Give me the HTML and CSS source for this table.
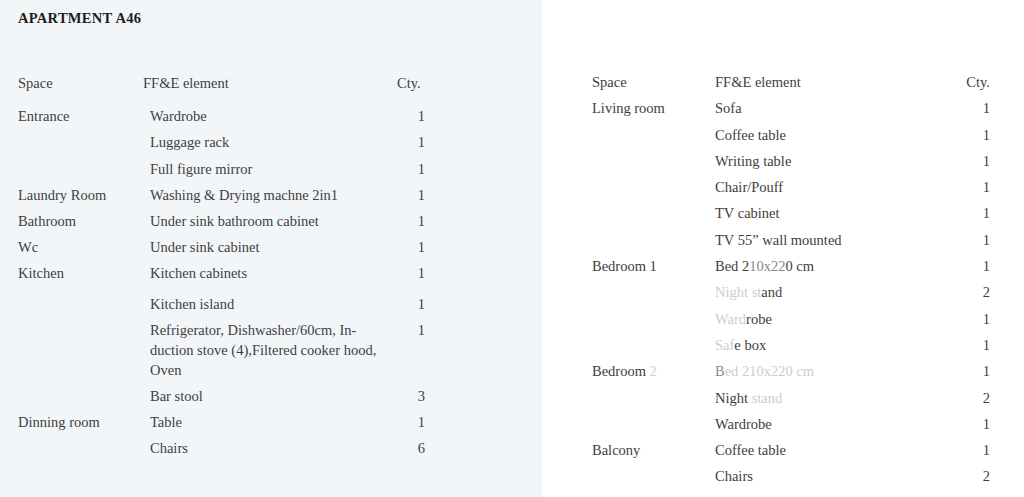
FILE: index.html
```html
<!DOCTYPE html>
<html lang="en">
<head>
<meta charset="utf-8">
<title>Apartment A46</title>
<link rel="stylesheet" href="styles.css">
</head>
<body>
<div class="page">
  <section class="panel panel-left">
    <h1 class="title">APARTMENT A46</h1>
    <table class="ffe ffe-left">
      <colgroup><col class="c-space"><col class="c-item"><col class="c-qty"></colgroup>
      <thead>
        <tr><th class="space">Space</th><th class="item head-item">FF&amp;E element</th><th class="qty head-qty">Cty.</th></tr>
      </thead>
      <tbody>
        <tr class="first"><td class="space">Entrance</td><td class="item">Wardrobe</td><td class="qty">1</td></tr>
        <tr><td class="space"></td><td class="item">Luggage rack</td><td class="qty">1</td></tr>
        <tr><td class="space"></td><td class="item">Full figure mirror</td><td class="qty">1</td></tr>
        <tr><td class="space">Laundry Room</td><td class="item">Washing &amp; Drying machne 2in1</td><td class="qty">1</td></tr>
        <tr><td class="space">Bathroom</td><td class="item">Under sink bathroom cabinet</td><td class="qty">1</td></tr>
        <tr><td class="space">Wc</td><td class="item">Under sink cabinet</td><td class="qty">1</td></tr>
        <tr><td class="space">Kitchen</td><td class="item">Kitchen cabinets</td><td class="qty">1</td></tr>
        <tr class="spaced"><td class="space"></td><td class="item">Kitchen island</td><td class="qty">1</td></tr>
        <tr><td class="space"></td><td class="item">Refrigerator, Dishwasher/60cm, In-<br>duction stove (4),Filtered cooker hood,<br>Oven</td><td class="qty">1</td></tr>
        <tr><td class="space"></td><td class="item">Bar stool</td><td class="qty">3</td></tr>
        <tr><td class="space">Dinning room</td><td class="item">Table</td><td class="qty">1</td></tr>
        <tr><td class="space"></td><td class="item">Chairs</td><td class="qty">6</td></tr>
      </tbody>
    </table>
  </section>
  <section class="panel panel-right">
    <table class="ffe ffe-right">
      <colgroup><col class="c-space"><col class="c-item"><col class="c-qty"></colgroup>
      <thead>
        <tr><th class="space">Space</th><th class="item">FF&amp;E element</th><th class="qty">Cty.</th></tr>
      </thead>
      <tbody>
        <tr><td class="space">Living room</td><td class="item">Sofa</td><td class="qty">1</td></tr>
        <tr><td class="space"></td><td class="item">Coffee table</td><td class="qty">1</td></tr>
        <tr><td class="space"></td><td class="item">Writing table</td><td class="qty">1</td></tr>
        <tr><td class="space"></td><td class="item">Chair/Pouff</td><td class="qty">1</td></tr>
        <tr><td class="space"></td><td class="item">TV cabinet</td><td class="qty">1</td></tr>
        <tr><td class="space"></td><td class="item">TV 55” wall mounted</td><td class="qty">1</td></tr>
        <tr><td class="space">Bedroom 1</td><td class="item">Bed 2<span class="soft">10x22</span>0 cm</td><td class="qty">1</td></tr>
        <tr><td class="space"></td><td class="item"><span class="faded">Night st</span>and</td><td class="qty">2</td></tr>
        <tr><td class="space"></td><td class="item"><span class="faded">Ward</span>robe</td><td class="qty">1</td></tr>
        <tr><td class="space"></td><td class="item"><span class="faded">Saf</span>e box</td><td class="qty">1</td></tr>
        <tr><td class="space">Bedroom <span class="faded">2</span></td><td class="item"><span class="soft">B</span><span class="faded">ed 210x220 cm</span></td><td class="qty">1</td></tr>
        <tr><td class="space"></td><td class="item">Night<span class="faded"> stand</span></td><td class="qty">2</td></tr>
        <tr><td class="space"></td><td class="item">Wardrobe</td><td class="qty">1</td></tr>
        <tr><td class="space">Balcony</td><td class="item">Coffee table</td><td class="qty">1</td></tr>
        <tr><td class="space"></td><td class="item">Chairs</td><td class="qty">2</td></tr>
      </tbody>
    </table>
  </section>
</div>
</body>
</html>
```

FILE: styles.css
```css
html, body {
  margin: 0;
  padding: 0;
  background: #ffffff;
}

body {
  font-family: "Liberation Serif", "DejaVu Serif", serif;
  color: #3e3e3e;
  font-size: 14.5px;
}

.page {
  display: flex;
  height: 497px;
  overflow: hidden;
}

.panel-left {
  width: 542px;
  flex: none;
  background: #f3f6f9;
  padding: 9px 0 0 18px;
  box-sizing: border-box;
}

.panel-right {
  flex: 1;
  padding: 69px 0 0 50px;
}

.title {
  margin: 0 0 43px;
  font-size: 14.5px;
  line-height: 18px;
  font-weight: bold;
  letter-spacing: 0.3px;
  color: #1c1c1c;
}

.ffe {
  border-collapse: collapse;
  border-spacing: 0;
  table-layout: fixed;
}

.ffe th,
.ffe td {
  font-weight: normal;
  text-align: left;
  vertical-align: top;
  line-height: 20px;
  padding: 3px 0 3.2px;
  white-space: nowrap;
}

.ffe-left {
  width: 408px;
}
.ffe-left .c-space { width: 125px; }
.ffe-left .c-item { width: 254px; }
.ffe-left .c-qty { width: 29px; }

.ffe-left td.item {
  padding-left: 7px;
}
.ffe-left th.head-item {
  padding-left: 0;
}
.ffe-left .first td {
  padding-top: 10px;
}
.ffe-left .spaced td {
  padding-top: 7px;
}
.ffe-left td.qty {
  text-align: right;
  padding-right: 1px;
}
.ffe-left th.head-qty {
  text-align: left;
}

.ffe-right {
  width: 398px;
}
.ffe-right .c-space { width: 123px; }
.ffe-right .c-item { width: 235px; }
.ffe-right .c-qty { width: 40px; }

.ffe-right th,
.ffe-right td {
  padding: 3px 0 3.3px;
}
.ffe-right .qty {
  text-align: right;
}

.faded {
  color: #cdcdcd;
}
.soft {
  color: #8a8a8a;
}
```
